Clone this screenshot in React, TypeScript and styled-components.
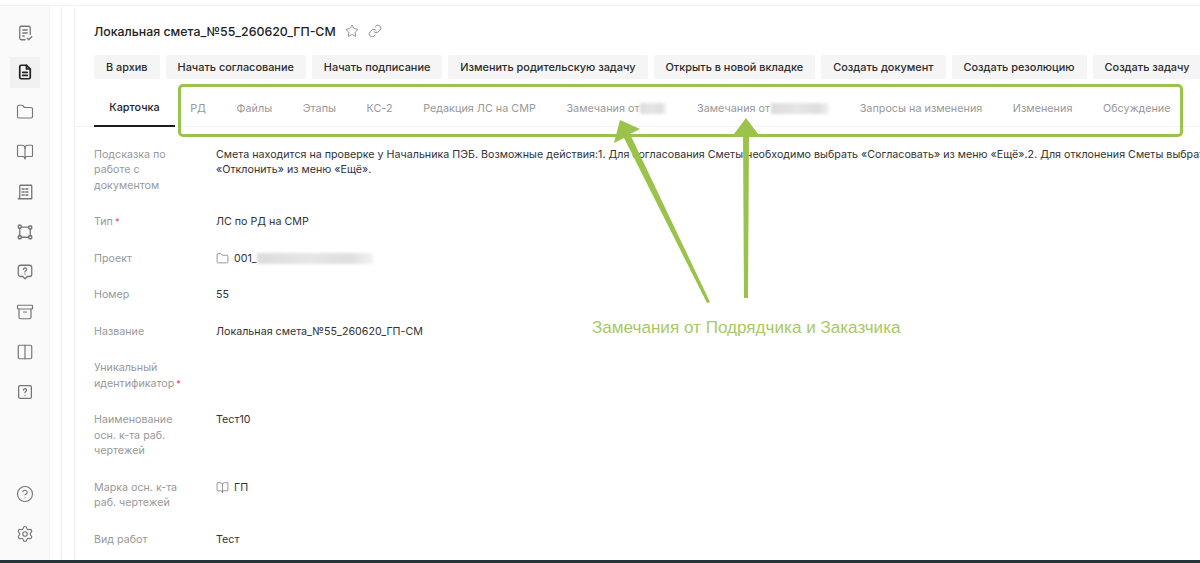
import React from 'react';
import styled, { createGlobalStyle } from 'styled-components';
import { Archive, BookOpen, CircleHelp, Columns2, Folder, Link, Settings, Star } from 'lucide-react';

const GlobalStyle = createGlobalStyle`
  html, body {
    margin: 0;
    padding: 0;
    height: 563px;
    overflow: hidden;
    background: #fff;
    font-family: Inter, "Noto Sans", sans-serif;
    color: #2b2b2b;
  }
`;

const Page = styled.div`
  position: relative;
  width: 1200px;
  height: 563px;
  overflow: hidden;
  display: flex;
  flex-direction: column;
  background: #fff;
`;

const TopStrip = styled.div`
  height: 5px;
  flex: none;
  border-bottom: 1px solid #f1f1f1;
`;

const Body = styled.div`
  flex: 1;
  min-height: 0;
  display: flex;
`;

const BottomEdge = styled.div`
  height: 3px;
  flex: none;
  background: #25343a;
`;

const Sidebar = styled.nav`
  width: 50px;
  flex: none;
  box-sizing: border-box;
  padding: 11px 0 2px;
  display: flex;
  flex-direction: column;
  align-items: center;
  background: #fafafa;
  border-right: 1px solid #f3f3f3;
`;

const SideItem = styled.div<{ $active?: boolean }>`
  width: 30px;
  height: 31px;
  margin-bottom: 8.9px;
  flex: none;
  display: flex;
  align-items: center;
  justify-content: center;
  background: ${p => (p.$active ? '#f1f1f1' : 'transparent')};
  color: ${p => (p.$active ? '#222' : '#757575')};
`;

const SideFooter = styled.div`
  margin-top: auto;
  display: flex;
  flex-direction: column;
  align-items: center;
`;

const Rail = styled.div<{ $w: number }>`
  width: ${p => p.$w}px;
  flex: none;
  box-sizing: border-box;
  border-right: 1px solid #f5f5f5;
`;

const Main = styled.main`
  flex: 1;
  min-width: 0;
  overflow: hidden;
`;

const TitleRow = styled.div`
  height: 26px;
  margin-top: 12px;
  padding-left: 19px;
  display: flex;
  align-items: center;
  gap: 9px;
  color: #777;
`;

const Title = styled.h1`
  margin: 0;
  font-size: 12.35px;
  font-weight: 500;
  color: #222;
  white-space: nowrap;
`;

const Actions = styled.div`
  margin-top: 11px;
  padding-left: 19px;
  display: flex;
  gap: 6px;
  white-space: nowrap;
`;

const ActionButton = styled.button`
  flex: none;
  height: 24px;
  padding: 0 12px;
  border: 0;
  border-radius: 2px;
  background: #f5f5f5;
  color: #2b2b2b;
  font-family: inherit;
  font-size: 10.9px;
  font-weight: 500;
`;

const Tabs = styled.div`
  height: 48px;
  box-sizing: border-box;
  padding-left: 19px;
  display: flex;
  border-bottom: 1px solid #f2f2f2;
  white-space: nowrap;
`;

const Tab = styled.div<{ $active?: boolean }>`
  flex: none;
  height: 48px;
  box-sizing: border-box;
  padding: 10px 15.3px 0;
  display: flex;
  align-items: center;
  font-size: 10.8px;
  font-weight: ${p => (p.$active ? 500 : 400)};
  color: ${p => (p.$active ? '#222' : '#999')};
  border-bottom: ${p => (p.$active ? '2px solid #1c1c1c' : '0')};
`;

const Hidden = styled.span<{ $w: number }>`
  display: inline-block;
  width: ${p => p.$w}px;
  height: 11px;
  margin-left: 1px;
  background: linear-gradient(90deg, #dcdcdc, #e6e6e6 45%, #dedede 80%, #f2f2f2);
  filter: blur(1.4px);
`;

const ProjectHidden = styled(Hidden)`
  margin-left: -5px;
`;

const Form = styled.dl`
  margin: 19.5px 0 0;
  padding-left: 19px;
  display: grid;
  grid-template-columns: 122px 1fr;
  row-gap: 21px;
  font-size: 10.7px;
  line-height: 15.5px;
`;

const Label = styled.dt`
  margin: 0;
  width: 88px;
  color: #999;
`;

const Required = styled.span`
  margin-left: 2px;
  font-size: 9px;
  color: #e5344f;
`;

const Value = styled.dd`
  margin: 0;
  color: #333;
  white-space: nowrap;
`;

const ValueIcon = styled.span`
  display: flex;
  height: 15.5px;
  align-items: center;
  gap: 5px;
  color: #777;
`;

const ValueText = styled.span`
  color: #333;
`;

const Frame = styled.div`
  position: absolute;
  left: 178px;
  top: 84px;
  width: 1005px;
  height: 53px;
  box-sizing: border-box;
  border: 3px solid #9ac24e;
  border-radius: 5px;
`;

const Arrows = styled.svg`
  position: absolute;
  left: 600px;
  top: 110px;
`;

const Note = styled.div`
  position: absolute;
  left: 592px;
  top: 318px;
  font-family: "Liberation Sans", Arial, sans-serif;
  font-size: 17.1px;
  line-height: 19px;
  color: #a8c963;
  white-space: nowrap;
`;

const icon = { width: 18, height: 18, viewBox: '0 0 24 24', fill: 'none', stroke: 'currentColor', strokeWidth: 1.7, strokeLinecap: 'round' as const, strokeLinejoin: 'round' as const };

const ChecklistIcon = () => (
  <svg {...icon}>
    <path d="M12 21H7a2 2 0 0 1-2-2V5a2 2 0 0 1 2-2h10a2 2 0 0 1 2 2v9" />
    <path d="M9 8h6M9 12h6M9 16h2" />
    <path d="m15 19 2 2 4-4" />
  </svg>
);

const DocIcon = () => (
  <svg {...icon} strokeWidth={2.3}>
    <path d="M14 3H7a2 2 0 0 0-2 2v14a2 2 0 0 0 2 2h10a2 2 0 0 0 2-2V8z" />
    <path d="M14 3v5h5M9 12.5h6M9 16.5h6" />
  </svg>
);

const BuildingIcon = () => (
  <svg {...icon}>
    <path d="M3 21h18M5 21V4a1 1 0 0 1 1-1h14a1 1 0 0 1 1 1v17" />
    <path d="M8 8h3M13 8h3M8 12h3M13 12h3M8 16h3M13 16h3" />
  </svg>
);

const NodesIcon = () => (
  <svg {...icon}>
    <rect x="3" y="3" width="4" height="4" rx="1" />
    <rect x="17" y="4" width="4" height="4" rx="1" />
    <rect x="3" y="17" width="4" height="4" rx="1" />
    <rect x="17" y="17" width="4" height="4" rx="1" />
    <path d="M7 5.5h10M5 7v10M19 8v9M7 19h10" />
  </svg>
);

const QuestionBubbleIcon = () => (
  <svg {...icon}>
    <path d="M6 3h12a3 3 0 0 1 3 3v9a3 3 0 0 1-3 3h-3l-3 3-3-3H6a3 3 0 0 1-3-3V6a3 3 0 0 1 3-3z" />
    <path d="M10 8.5a2 2 0 1 1 3 1.8c-.7.4-1 .9-1 1.7M12 15h.01" />
  </svg>
);

const QuestionSquareIcon = () => (
  <svg {...icon}>
    <rect x="3.5" y="3.5" width="17" height="17" rx="2" />
    <path d="M10 9.5a2 2 0 1 1 3 1.8c-.7.4-1 .9-1 1.7M12 16.5h.01" />
  </svg>
);

const actions = ['В архив', 'Начать согласование', 'Начать подписание', 'Изменить родительскую задачу', 'Открыть в новой вкладке', 'Создать документ', 'Создать резолюцию', 'Создать задачу'];

const App: React.FC = () => (
  <Page>
    <GlobalStyle />
    <TopStrip />
    <Body>
      <Sidebar>
        <SideItem><ChecklistIcon /></SideItem>
        <SideItem $active><DocIcon /></SideItem>
        <SideItem><Folder size={18} strokeWidth={1.5} /></SideItem>
        <SideItem><BookOpen size={18} strokeWidth={1.5} /></SideItem>
        <SideItem><BuildingIcon /></SideItem>
        <SideItem><NodesIcon /></SideItem>
        <SideItem><QuestionBubbleIcon /></SideItem>
        <SideItem><Archive size={18} strokeWidth={1.6} /></SideItem>
        <SideItem><Columns2 size={18} strokeWidth={1.6} /></SideItem>
        <SideItem><QuestionSquareIcon /></SideItem>
        <SideFooter>
          <SideItem><CircleHelp size={18} strokeWidth={1.5} /></SideItem>
          <SideItem><Settings size={18} strokeWidth={1.5} /></SideItem>
        </SideFooter>
      </Sidebar>
      <Rail $w={12} />
      <Rail $w={13} />
      <Main>
        <TitleRow>
          <Title>Локальная смета_№55_260620_ГП-СМ</Title>
          <Star size={14} strokeWidth={1.4} />
          <Link size={14} strokeWidth={1.4} />
        </TitleRow>
        <Actions>
          {actions.map(a => <ActionButton key={a}>{a}</ActionButton>)}
        </Actions>
        <Tabs>
          <Tab $active>Карточка</Tab>
          <Tab>РД</Tab>
          <Tab>Файлы</Tab>
          <Tab>Этапы</Tab>
          <Tab>КС-2</Tab>
          <Tab>Редакция ЛС на СМР</Tab>
          <Tab>Замечания от<Hidden $w={26} /></Tab>
          <Tab>Замечания от<Hidden $w={58} /></Tab>
          <Tab>Запросы на изменения</Tab>
          <Tab>Изменения</Tab>
          <Tab>Обсуждение</Tab>
        </Tabs>
        <Form>
          <Label>Подсказка по работе с документом</Label>
          <Value>
            Смета находится на проверке у Начальника ПЭБ. Возможные действия:1. Для согласования Сметы необходимо выбрать «Согласовать» из меню «Ещё».2. Для отклонения Сметы выбрать
            <br />
            «Отклонить» из меню «Ещё».
          </Value>
          <Label>Тип<Required>*</Required></Label>
          <Value>ЛС по РД на СМР</Value>
          <Label>Проект</Label>
          <Value>
            <ValueIcon>
              <Folder size={13} strokeWidth={1.4} />
              <ValueText>001_</ValueText>
              <ProjectHidden $w={116} />
            </ValueIcon>
          </Value>
          <Label>Номер</Label>
          <Value>55</Value>
          <Label>Название</Label>
          <Value>Локальная смета_№55_260620_ГП-СМ</Value>
          <Label>Уникальный идентификатор<Required>*</Required></Label>
          <Value />
          <Label>Наименование осн. к-та раб. чертежей</Label>
          <Value>Тест10</Value>
          <Label>Марка осн. к-та раб. чертежей</Label>
          <Value>
            <ValueIcon>
              <BookOpen size={13} strokeWidth={1.4} />
              <ValueText>ГП</ValueText>
            </ValueIcon>
          </Value>
          <Label>Вид работ</Label>
          <Value>Тест</Value>
        </Form>
      </Main>
    </Body>
    <BottomEdge />
    <Frame />
    <Arrows width={170} height={200} viewBox="600 110 170 200">
      <polygon fill="#9bc34b" points="620,120 640,129 630,134 710,302 707,303 624,138 614,143" />
      <polygon fill="#9bc34b" points="746,118 758,134 749,134 748,298 744,298 743,134 734,134" />
    </Arrows>
    <Note>Замечания от Подрядчика и Заказчика</Note>
  </Page>
);

export default App;
